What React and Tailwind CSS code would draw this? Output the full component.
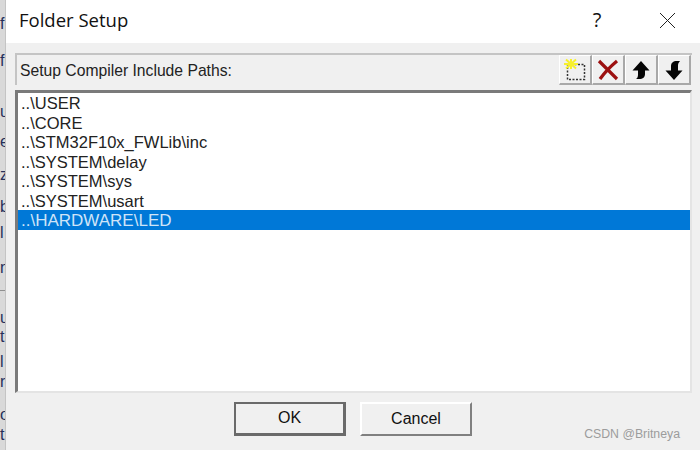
const paths = [
  '..\\USER',
  '..\\CORE',
  '..\\STM32F10x_FWLib\\inc',
  '..\\SYSTEM\\delay',
  '..\\SYSTEM\\sys',
  '..\\SYSTEM\\usart',
  '..\\HARDWARE\\LED',
];

// bits of the window behind the dialog
const behind = [
  { text: 'f', h: 'h-[37px]' },
  { text: 'f', h: 'h-[51px]' },
  { text: 'u', h: 'h-[30px]' },
  { text: 'e', h: 'h-[33px]' },
  { text: 'z', h: 'h-[32px]' },
  { text: 'b', h: 'h-[26px]' },
  { text: 'l', h: 'h-[35px]' },
  { text: 'n', h: 'h-[31px]' },
  { line: true, h: 'h-[19px]' },
  { text: 'u', h: 'h-[19px]' },
  { text: 't', h: 'h-[25px]' },
  { text: 'l', h: 'h-[20px]' },
  { text: 'r', h: 'h-[33px]' },
  { text: 'o', h: 'h-[20px]' },
  { text: 't', h: 'h-[18px]' },
];

function NewIcon() {
  return (
    <svg width="24" height="24" viewBox="0 0 24 24">
      <rect x="4.5" y="6.5" width="17" height="15" fill="none" stroke="#333" strokeWidth="1.5" strokeDasharray="2 1.5" />
      <path d="M8 1v10M1 6h14M3 1.500l10 9M13 1.500l-10 9" stroke="#f7f02c" strokeWidth="2" />
    </svg>
  );
}

function DeleteIcon() {
  return (
    <svg width="22" height="22" viewBox="0 0 22 22">
      <path d="M2 2l18 18M20 2C14 7 8 13 3 20" fill="none" stroke="#9c1010" strokeWidth="3.200" />
    </svg>
  );
}

function UpIcon() {
  return (
    <svg width="20" height="22" viewBox="0 0 20 22">
      <path d="M10 2l8.500 9.500H14V15c0 3-2 5-6 5H5c1.500-1 2-2.500 2-4.500v-4H1.500z" fill="#050505" />
    </svg>
  );
}

function DownIcon() {
  return (
    <svg width="20" height="22" viewBox="0 0 20 22">
      <path d="M10 21l8.500-9.500H14V7c0-2 .5-3.500 2-5h-3C9 2 7 4 7 7v4.500H1.500z" fill="#050505" />
    </svg>
  );
}

function ToolButton({ children }) {
  return (
    <div className="w-[33px] h-[30px] flex items-center justify-center bg-[#f0f0f0] border-t border-l border-t-white border-l-white border-r-2 border-b-2 border-r-[#a8a8a8] border-b-[#a8a8a8]">
      {children}
    </div>
  );
}

function DialogButton({ label, isDefault }) {
  return (
    <button
      className={`w-[112px] h-[34px] pb-[1px] bg-[#f0f0f0] text-[16px] text-[#111] ${
        isDefault
          ? 'border-2 border-[#6a6a6a] border-r-[3px] border-b-[3px]'
          : 'border-t-2 border-l-2 border-t-white border-l-white border-r-2 border-b-2 border-r-[#808080] border-b-[#808080]'
      }`}
    >
      {label}
    </button>
  );
}

export default function App() {
  return (
    <div className="relative flex w-[700px] h-[450px] overflow-hidden bg-white font-['Liberation_Sans',sans-serif]">
      <div className="w-[6px] shrink-0 overflow-hidden bg-[#d9d9d9] border-r border-r-[#c4c4c4] pt-[15px] text-[16px] leading-[18px] text-[#26305a]">
        {behind.map((item, i) =>
          item.line ? (
            <div key={i} className={`${item.h} border-t border-t-[#8f8f8f]`} />
          ) : (
            <div key={i} className={item.h}>
              {item.text}
            </div>
          ),
        )}
      </div>

      <div className="flex-1 flex flex-col min-w-0">
        <div className="h-[43px] shrink-0 bg-white flex items-center pb-[3px] pl-[13px] text-[#111]">
          <span className="font-['Open_Sans',sans-serif] text-[18.500px]">Folder Setup</span>
          <span className="ml-auto font-['Open_Sans',sans-serif] text-[20px] w-[24px] text-center">?</span>
          <span className="w-[49px] ml-[34px] mr-[8px] flex justify-center">
            <svg width="17" height="17" viewBox="0 0 17 17">
              <path d="M1 1l15 15M16 1L1 16" stroke="#222" strokeWidth="1" />
            </svg>
          </span>
        </div>

        <div className="flex-1 bg-[#f0f0f0] pt-[10px] pl-[9px] pr-[8px] flex flex-col">
          <div className="h-[32px] shrink-0 flex items-center justify-between pl-[3px] pr-[1px] border-t-2 border-l-2 border-t-[#c4c4c4] border-l-[#c4c4c4]">
            <span className="pt-[2px] text-[15.700px] text-[#222]">Setup Compiler Include Paths:</span>
            <div className="flex self-start">
              <ToolButton><NewIcon /></ToolButton>
              <ToolButton><DeleteIcon /></ToolButton>
              <ToolButton><UpIcon /></ToolButton>
              <ToolButton><DownIcon /></ToolButton>
            </div>
          </div>

          <div className="h-[303px] mt-[5px] shrink-0 bg-white border-t-[3px] border-l-[3px] border-t-[#7a7a7a] border-l-[#7a7a7a] border-r-2 border-b-2 border-r-[#e4e4e4] border-b-[#e4e4e4]">
            {paths.map((path, i) => (
              <div
                key={path}
                className={`h-[19.5px] pl-[3px] leading-[21px] whitespace-nowrap ${
                  i === paths.length - 1 ? 'bg-[#0078d7] text-[#cfe4f7] text-[17px]' : 'text-[#222] text-[16.500px]'
                }`}
              >
                {path}
              </div>
            ))}
          </div>

          <div className="flex gap-[14px] mt-[9px] pl-[219px]">
            <DialogButton label="OK" isDefault />
            <DialogButton label="Cancel" />
          </div>
        </div>
      </div>

      <span className="absolute right-[20px] bottom-[7px] text-[12.300px] text-[#9c9c9c]">CSDN @Britneya</span>
    </div>
  );
}
